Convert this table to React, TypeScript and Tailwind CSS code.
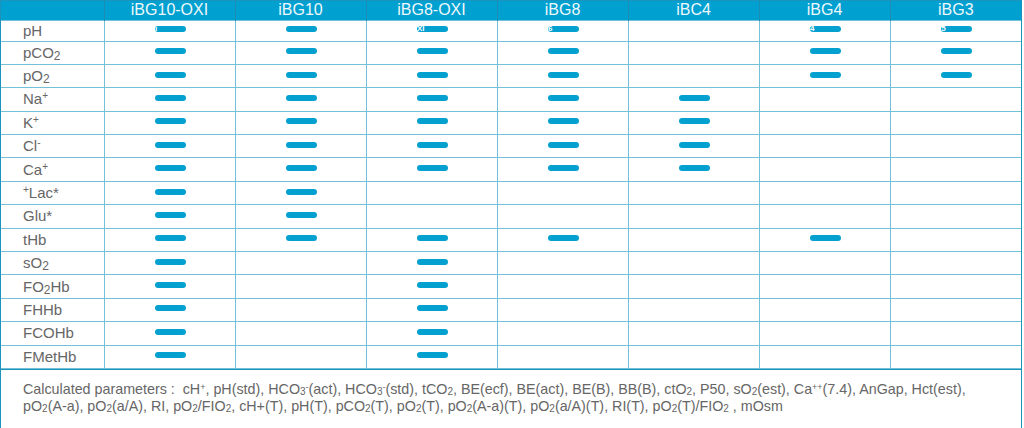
import React from "react"

const models = ["iBG10-OXI", "iBG10", "iBG8-OXI", "iBG8", "iBC4", "iBG4", "iBG3"]

type Row = { label: React.ReactNode; cells: number[] }

const Sub = ({ children }: { children: React.ReactNode }) => (
  <span className="align-[-2px] text-[12px] leading-none">{children}</span>
)
const Sup = ({ children }: { children: React.ReactNode }) => (
  <span className="align-[5px] text-[10px] leading-none">{children}</span>
)
const FSub = ({ children }: { children: React.ReactNode }) => (
  <span className="align-[-1px] text-[10px] leading-none">{children}</span>
)
const FSup = ({ children }: { children: React.ReactNode }) => (
  <span className="align-[4px] text-[9px] leading-none">{children}</span>
)

const rows: Row[] = [
  { label: "pH", cells: [1, 1, 1, 1, 0, 1, 1] },
  { label: <>pCO<Sub>2</Sub></>, cells: [1, 1, 1, 1, 0, 1, 1] },
  { label: <>pO<Sub>2</Sub></>, cells: [1, 1, 1, 1, 0, 1, 1] },
  { label: <>Na<Sup>+</Sup></>, cells: [1, 1, 1, 1, 1, 0, 0] },
  { label: <>K<Sup>+</Sup></>, cells: [1, 1, 1, 1, 1, 0, 0] },
  { label: <>Cl<Sup>-</Sup></>, cells: [1, 1, 1, 1, 1, 0, 0] },
  { label: <>Ca<Sup>+</Sup></>, cells: [1, 1, 1, 1, 1, 0, 0] },
  { label: <><Sup>+</Sup>Lac*</>, cells: [1, 1, 0, 0, 0, 0, 0] },
  { label: "Glu*", cells: [1, 1, 0, 0, 0, 0, 0] },
  { label: "tHb", cells: [1, 1, 1, 1, 0, 1, 0] },
  { label: <>sO<Sub>2</Sub></>, cells: [1, 0, 1, 0, 0, 0, 0] },
  { label: <>FO<Sub>2</Sub>Hb</>, cells: [1, 0, 1, 0, 0, 0, 0] },
  { label: "FHHb", cells: [1, 0, 1, 0, 0, 0, 0] },
  { label: "FCOHb", cells: [1, 0, 1, 0, 0, 0, 0] },
  { label: "FMetHb", cells: [1, 0, 1, 0, 0, 0, 0] },
]

// stray glyphs that bleed into the pH bars
const phMarks = ["ı", "", "XI", "6", "", "4", "5"]

function Bar({ mark }: { mark?: string }) {
  return (
    <div className="flex items-center w-[31px] h-[6px] rounded-full bg-[#04a0d0] overflow-visible">
      {mark ? <span className="text-[8px] leading-none font-bold text-white">{mark}</span> : null}
    </div>
  )
}

export default function App() {
  return (
    <div className="w-[1024px] h-[428px] bg-white" style={{ fontFamily: '"Liberation Sans", Arial, sans-serif' }}>
      <div className="w-[1022px] border border-[#1b93bd]">
        <table className="w-full table-fixed border-collapse">
          <colgroup>
            <col className="w-[103px]" />
            {models.map((m) => (
              <col key={m} className="w-[131px]" />
            ))}
          </colgroup>
          <thead>
            <tr className="h-[19px] bg-[#00a0d0]">
              <th className="border-r border-[#1a8db5]"></th>
              {models.map((m) => (
                <th
                  key={m}
                  className="border-r border-[#1a8db5] last:border-r-0 p-0 text-center text-[16px] leading-[18px] font-normal text-[#eef8fc]"
                >
                  {m}
                </th>
              ))}
            </tr>
          </thead>
          <tbody>
            {rows.map((r, i) => (
              <tr key={i} className={i === 0 ? "h-[21px]" : "h-[23.4px]"}>
                <td className="border border-l-0 border-[#74c0d8] p-0 pl-[22px] text-[15px] leading-[18px] text-[#666666] whitespace-nowrap">
                  {r.label}
                </td>
                {r.cells.map((c, j) => (
                  <td key={j} className="border border-[#74c0d8] last:border-r-0 p-0">
                    {c ? (
                      <div className="flex justify-center pb-[3px] pl-[2px]">
                        <Bar mark={i === 0 ? phMarks[j] : undefined} />
                      </div>
                    ) : null}
                  </td>
                ))}
              </tr>
            ))}
          </tbody>
        </table>
        <div className="h-[59px] border-t border-[#1b93bd] pl-[22px] pt-[11px] text-[14.3px] leading-[17px] text-[#666666] whitespace-nowrap">
          <div>
            Calculated parameters :&nbsp; cH<FSup>+</FSup>, pH(std), HCO<FSub>3</FSub><FSup>-</FSup>(act), HCO<FSub>3</FSub>
            <FSup>-</FSup>(std), tCO<FSub>2</FSub>, BE(ecf), BE(act), BE(B), BB(B), ctO<FSub>2</FSub>, P50, sO
            <FSub>2</FSub>(est), Ca<FSup>++</FSup>(7.4), AnGap, Hct(est),
          </div>
          <div>
            pO<FSub>2</FSub>(A-a), pO<FSub>2</FSub>(a/A), RI, pO<FSub>2</FSub>/FIO<FSub>2</FSub>, cH+(T), pH(T), pCO
            <FSub>2</FSub>(T), pO<FSub>2</FSub>(T), pO<FSub>2</FSub>(A-a)(T), pO<FSub>2</FSub>(a/A)(T), RI(T), pO
            <FSub>2</FSub>(T)/FIO<FSub>2</FSub> , mOsm
          </div>
        </div>
      </div>
    </div>
  )
}
